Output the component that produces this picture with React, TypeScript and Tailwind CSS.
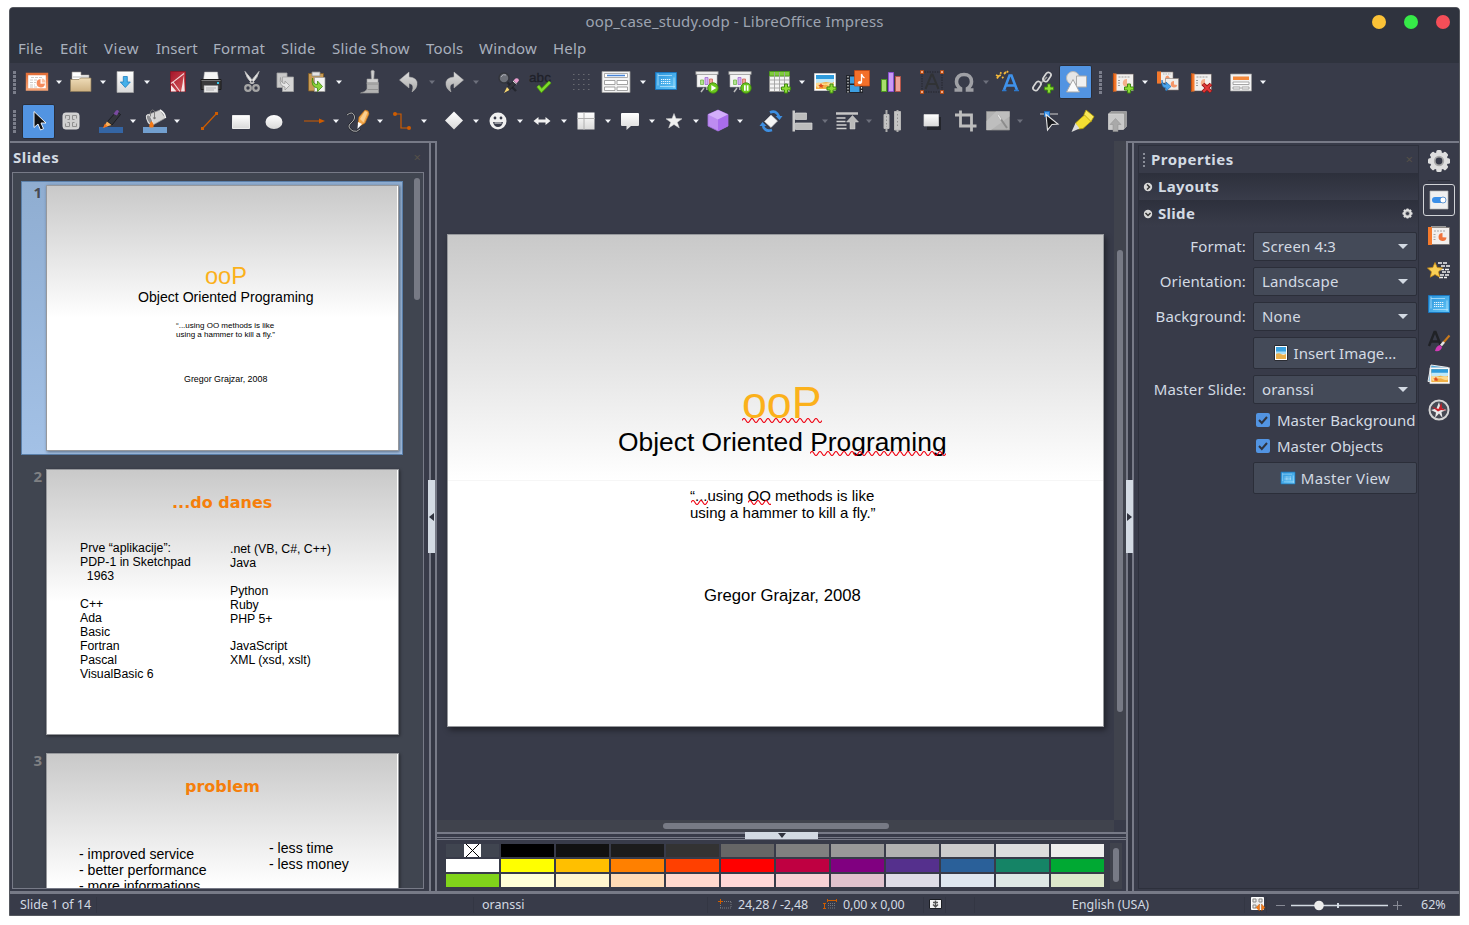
import type { ReactNode } from "react";

/* ---------- primitives ---------- */

type IconProps = { children: ReactNode; className?: string };

function Icon({ children, className = "" }: IconProps) {
  return (
    <svg viewBox="0 0 24 24" className={`block h-6 w-6 shrink-0 overflow-visible ${className}`} fill="none">
      {children}
    </svg>
  );
}

function Caret({ dim = false, className = "" }: { dim?: boolean; className?: string }) {
  return (
    <svg viewBox="0 0 8 8" className={`block h-2 w-2 shrink-0 ${className}`}>
      <path d="M1 2.500h6L4 6z" fill={dim ? "#6d707c" : "#f4f6fa"} />
    </svg>
  );
}

function Grip({ className = "" }: { className?: string }) {
  return (
    <div className={`flex w-1 shrink-0 flex-col gap-px ${className}`}>
      {[0, 1, 2, 3, 4, 5].map((i) => (
        <span key={i} className="h-[3px] w-[3px] bg-[#7b7e8b]" />
      ))}
    </div>
  );
}

/* ---------- shared drawings ---------- */

const Plus = ({ x = 0, y = 0 }: { x?: number; y?: number }) => (
  <path
    transform={`translate(${x} ${y})`}
    d="M3.500.500h3v3h3v3h-3v3h-3v-3h-3v-3h3z"
    fill="#8ddb35"
    stroke="#3f8a10"
  />
);

const SlideSheet = () => (
  <>
    <path d="M2 4h20.500v17H2z" fill="#f2f0ee" stroke="#5b5350" strokeWidth=".6" />
    <path d="M2 3.500h3.500v18H2z" fill="#f4782b" />
    <path d="M2 3.500h1.200v18H2z" fill="#c24f10" />
    <path d="M7.500 7h12M7 10.500h2M7 13h2M7 15.500h3" stroke="#9c9c9c" strokeDasharray="2 1" />
    <path d="M16 9a4 4 0 1 0 3.500 5.500L16 13.500z" fill="#f5b08c" />
  </>
);

const MasterDrawing = () => (
  <>
    <path d="M1.500 3.500h21v17h-21z" fill="url(#sky)" stroke="#1b76bd" />
    <path d="M4 4.500v12M4 6.500h14M20 19V8.500M6 17.500h15" stroke="#b4e2fb" strokeWidth=".8" />
    <path d="M7 10.500h10M7 12.500h10M7 14.500h10" stroke="#e8f6ff" strokeDasharray="1.300 .7" />
  </>
);

const Beach = () => (
  <>
    <path d="M1.500 3.500h21v17h-21z" fill="#fff" stroke="#d9d9d9" strokeWidth=".7" />
    <path d="M3 5h18v14H3z" fill="#f0b045" />
    <path d="M3 5h18v5H3z" fill="#2e9bdc" />
    <path d="M3 9h18v3q-2 1.500-5 .5t-6 0-7 .5z" fill="#bfe8f8" />
    <path d="M3 13q3-1 6 0t6 0 6 .5V16q-3 1.500-6-.5t-6 1-6-.5z" fill="#fdd98f" />
    <path d="M8 13l1 2 2 .3-1.500 1.200.3 1.500-1.800-.8-1.700.8.3-1.700L5.200 15l1.900-.2z" fill="#e04a1c" />
  </>
);

const Board = () => (
  <>
    <path d="M2 4h20v13H2z" fill="#f4f4f4" stroke="#b9b9b9" strokeWidth=".6" />
    <path d="M.8 1.500h22.400v3H.8z" fill="#e9e9e9" stroke="#8d8d8d" strokeWidth=".7" />
    <path d="M12 17v3m-3-2-3 4m9-4 3 4" stroke="#bdbdbd" strokeWidth="1.500" />
    <path d="M5.500 10h3v4.500h-3z" fill="#b3e38f" stroke="#72b84a" strokeWidth=".8" />
    <path d="M10 7.500h3v7h-3z" fill="#d6b1f0" stroke="#a06bd0" strokeWidth=".8" />
    <path d="M14.500 9h3v5.500h-3z" fill="#f0a59b" stroke="#ce6658" strokeWidth=".8" />
  </>
);

function Defs() {
  return (
    <svg className="absolute h-0 w-0" aria-hidden>
      <defs>
        <linearGradient id="sky" x1="0" y1="0" x2="1" y2="1">
          <stop offset="0" stopColor="#2c93da" />
          <stop offset="1" stopColor="#62c6f8" />
        </linearGradient>
        <linearGradient id="pale" x1="0" y1="0" x2="0" y2="1">
          <stop offset="0" stopColor="#ffffff" />
          <stop offset="1" stopColor="#d9d9d9" />
        </linearGradient>
        <linearGradient id="grey" x1="0" y1="0" x2="0" y2="1">
          <stop offset="0" stopColor="#dedede" />
          <stop offset="1" stopColor="#a9a9a9" />
        </linearGradient>
        <linearGradient id="folder" x1="0" y1="0" x2="0" y2="1">
          <stop offset="0" stopColor="#efdcb8" />
          <stop offset="1" stopColor="#cdb182" />
        </linearGradient>
        <linearGradient id="orange" x1="0" y1="0" x2="0" y2="1">
          <stop offset="0" stopColor="#e2703a" />
          <stop offset="1" stopColor="#f5a274" />
        </linearGradient>
        <linearGradient id="ruby" x1="0" y1="0" x2="1" y2="1">
          <stop offset="0" stopColor="#a5142a" />
          <stop offset="1" stopColor="#d65a5a" />
        </linearGradient>
      </defs>
    </svg>
  );
}

/* ---------- standard toolbar ---------- */

function StandardToolbar() {
  return (
    <div className="flex h-[38px] shrink-0 items-center gap-1.5 pl-[3px]">
      <Grip />
      <Icon className="ml-0.5">
        <path d="M2 4h20v15.500H2z" fill="#fff" stroke="url(#orange)" strokeWidth="2.400" />
        <path d="M6 7.500h12M5 10h7M5 12.500h6M5 15h5M5 17h7" stroke="#c9c4c0" strokeWidth=".9" strokeDasharray="3 1" />
        <path d="M15.500 9a4.200 4.200 0 1 0 4.500 4.500l-4.500.3z" fill="#f58b5c" />
        <path d="M16.800 8.500v4h3.700a4 4 0 0 0-3.700-4z" fill="#fbc2a4" />
      </Icon>
      <Caret />
      <Icon>
        <path d="M3 2h9v3h8v8H3z" fill="#fff" stroke="#98928a" strokeWidth=".6" />
        <path d="M4 7h16" stroke="#bbb" />
        <path d="M1.500 9.500H10L11.500 8h10.500V21.500h-20.500z" fill="url(#folder)" stroke="#8d7a58" strokeWidth=".7" />
      </Icon>
      <Caret />
      <Icon>
        <path d="M4 1.500h16.500v21H4z" fill="url(#pale)" stroke="#a5a5a5" strokeWidth=".7" />
        <path d="M10.300 6.500h4V12h3l-5 5.500-5-5.500h3z" fill="#45b0ea" stroke="#1d7fc0" strokeWidth=".8" />
      </Icon>
      <Caret />
      <Icon className="ml-[9px]">
        <path d="M4.500 1.500h15v20h-15z" fill="url(#ruby)" stroke="#8a1525" strokeWidth=".8" />
        <path d="M18 3.500L7 12l7 9.500M7 12l-2 1.500" stroke="#f3d6d8" strokeWidth="1.100" />
        <path d="M5 15v6.500h5.500z" fill="#f7e9e9" />
        <path d="M17.500 5q.8 8 1.200 16.500H15q2-8 2.500-16.500z" fill="#f4e4e4" />
      </Icon>
      <Icon className="ml-[3px]">
        <path d="M5.500 2h13l1 8h-15z" fill="#f5f5f5" stroke="#aaa" strokeWidth=".5" />
        <path d="M2 9.500h20v10H2z" fill="#3b3b3b" stroke="#1b1b1b" />
        <path d="M2.500 10.500h19" stroke="#777" />
        <path d="M5 15.500h14v7H5z" fill="#e8e8e8" stroke="#8c8c8c" strokeWidth=".6" />
        <path d="M7 18h10M7 20h8" stroke="#a5a5a5" strokeWidth=".8" />
        <path d="M18 12h2v2h-2z" fill="#35c7e8" />
      </Icon>
      <Icon className="ml-[11px]">
        <path d="M5 1.500q1 6 7.500 12.500l1.500-1.500Q9 6 5 1.500zM19 1.500q-1 6-7.500 12.500L10 12.500Q15 6 19 1.500z" fill="#e8e8e8" stroke="#c0c0c0" strokeWidth="1" />
        <circle cx="8" cy="18" r="2.800" stroke="#a5a5a5" strokeWidth="2.200" />
        <circle cx="16" cy="18" r="2.800" stroke="#a5a5a5" strokeWidth="2.200" />
      </Icon>
      <Icon className="ml-[3px]">
        <path d="M4 3h10v14.500H4z" fill="#c9c9c9" stroke="#a2a2a2" strokeWidth=".8" />
        <path d="M9.500 7h11v14.500h-11z" fill="#d5d5d5" stroke="#a2a2a2" strokeWidth=".8" />
        <path d="M7.500 7.500q0 6 4.500 6V11l4.500 4.500L12 20v-3Q6 16 7.500 7.500z" fill="#e6e6e6" stroke="#9a9a9a" strokeWidth=".8" />
      </Icon>
      <Icon className="ml-[3px]">
        <path d="M2.500 3.500h15V21h-15z" fill="#c99b54" stroke="#7d5a24" strokeWidth=".8" />
        <path d="M6 2h8v4H6z" fill="#e5e5e5" stroke="#8c8c8c" strokeWidth=".8" />
        <path d="M8.500 7.500h10.500v14H8.500z" fill="#f4f4f4" stroke="#9a9a9a" strokeWidth=".7" />
        <path d="M6.500 8q0 6.500 5 6.500V11l5 5.500-5 5v-3.500Q4.500 17 6.500 8z" fill="#8ad23c" stroke="#3f8a10" strokeWidth=".8" />
      </Icon>
      <Caret className="-ml-px" />
      <Icon className="ml-2.5">
        <path d="M12 1q1.700-1.500 3.300 0L14.800 9h4.200v5H8V9h4.500z" fill="#cfcfcf" stroke="#9a9a9a" strokeWidth=".6" />
        <path d="M8 12.500h11.500v10.500H1.500q5-1 6.500-4z" fill="#b3b3b3" stroke="#999" strokeWidth=".6" />
        <path d="M8.500 14h10.500M8.500 19.500h10.500" stroke="#929292" />
      </Icon>
      <Icon className="ml-2">
        <path d="M12 2v5q9 .5 8 8-.5 4-5 7 3-8-3-8.500v4.500L2.500 10z" fill="url(#grey)" stroke="#b5b5b5" strokeWidth=".5" />
      </Icon>
      <Caret dim className="ml-px" />
      <Icon>
        <path d="M12 2v5q-9 .5-8 8 .5 4 5 7-3-8 3-8.500v4.500L21.500 10z" fill="url(#grey)" stroke="#b5b5b5" strokeWidth=".5" />
      </Icon>
      <Caret dim />
      <Icon className="ml-2.5">
        <path d="M11 12l9 9" stroke="#25272f" strokeWidth="2.400" />
        <circle cx="8" cy="8" r="5" fill="#6d7078" stroke="#33353c" strokeWidth="1.500" />
        <path d="M5 7q2-3.500 5-2" stroke="#a9abb2" />
        <path d="M9 22l2.500-5 6.500-6.500 3 2.500-7.500 7z" fill="#33353b" stroke="#17181c" strokeWidth=".6" />
        <path d="M8 23l3-6 2.500 3z" fill="#f7d774" />
        <path d="M17.500 10.500l2-2q3-1 3.500 2l-2.500 3z" fill="#eb9fd0" />
        <path d="M17 11l3.500 3" stroke="#eee" />
      </Icon>
      <Icon className="ml-0.5">
        <text x="12" y="12" textAnchor="middle" fontFamily="Liberation Sans, Arial, sans-serif" fontSize="13.500" fill="#1f2129" stroke="#1f2129" strokeWidth=".3">
          abc
        </text>
        <path d="M10 16l3.500 4.500L22 12" stroke="#4e9a06" strokeWidth="3.800" />
        <path d="M10 16l3.500 4.500L22 12" stroke="#7ddc30" strokeWidth="2.200" />
      </Icon>
      <Icon className="ml-[11px]">
        {[4, 9, 14, 19].map((y) => (
          <path key={y} d={`M4 ${y + 0.5}h17`} stroke="#686a71" strokeWidth="1.200" strokeDasharray="1.500 3.500" />
        ))}
      </Icon>
      <svg viewBox="0 0 30 24" className="ml-0.5 block h-6 w-[30px] shrink-0" fill="none">
        <path d="M1 1.500h28v21H1z" fill="#f3f3f3" stroke="#9a9a9a" strokeWidth=".8" />
        <path d="M3.500 3.500h23v4h-23z" fill="#fff" stroke="#999" strokeWidth=".8" />
        <path d="M6 5.500h18" stroke="#4a86d8" strokeWidth="1.500" />
        <path d="M3.500 10.500h10.500v4H3.500zM16 10.500h10.500v4H16zM3.500 17h10.500v3.500H3.500zM16 17h10.500v3.500H16z" fill="#fff" stroke="#999" strokeWidth=".9" />
      </svg>
      <Caret className="ml-0.5" />
      <Icon className="-mt-0.5 ml-px">
        <MasterDrawing />
      </Icon>
      <Icon className="ml-[11px]">
        <Board />
        <circle cx="18" cy="18" r="5.200" fill="#6cc71e" stroke="#3f8a10" strokeWidth=".9" />
        <path d="M16.300 15l5 3-5 3z" fill="#fff" />
      </Icon>
      <Icon className="ml-[3px]">
        <Board />
        <circle cx="18" cy="18" r="5.200" fill="#6cc71e" stroke="#3f8a10" strokeWidth=".9" />
        <path d="M16 15.300h1.700v5.400H16zM18.800 15.300h1.700v5.400h-1.700z" fill="#fff" />
      </Icon>
      <Icon className="ml-2.5">
        <path d="M1.500 6h20v15.500h-20z" fill="#f4f4f4" stroke="#8f8f8f" strokeWidth=".8" />
        <path d="M1.500 1.500h20V6h-20z" fill="#7ecb3c" stroke="#4a9a14" strokeWidth=".8" />
        <path d="M6.500 2v19M11.500 2v19M16.500 2v19M2 10h19M2 14h19M2 18h19" stroke="#a2a2a2" strokeWidth=".9" />
        <Plus x={13} y={13.5} />
      </Icon>
      <Caret />
      <Icon className="ml-px">
        <Beach />
        <Plus x={13.5} y={13.5} />
      </Icon>
      <Icon className="ml-[3px]">
        <path d="M0 5h17v18H0z" fill="#22252c" />
        <path d="M4 6.500h9.500v7H4zM4 15h9.500v7H4z" fill="#3d9fe2" />
        <path d="M2 6v17M15.500 14v9" stroke="#dcdcdc" strokeWidth="1.200" strokeDasharray="1.500 1.500" />
        <path d="M8.500.500h15v15.500h-15z" fill="#f4702a" stroke="#c8480d" strokeWidth=".7" />
        <path d="M15.500 12.500V4q.5 2.500 3 4" stroke="#fff" strokeWidth="1.300" />
        <ellipse cx="13.800" cy="12.500" rx="2" ry="1.500" fill="#fff" />
      </Icon>
      <Icon className="ml-[3px]">
        <path d="M2.500 9.500h5v12h-5z" fill="#a8e06c" stroke="#4e9a20" />
        <path d="M9.500 2.500h5v19h-5z" fill="#c99bf5" stroke="#8a4fd0" />
        <path d="M16.500 6.500h5v15h-5z" fill="#eda398" stroke="#b7564a" />
      </Icon>
      <Icon className="ml-[11px]">
        <path d="M2 2h20v20H2z" stroke="#25272e" strokeDasharray="1.500 1" />
        <path d="M5.500 19l6-14.500h1L18.500 19M8 14h8" stroke="#303235" strokeWidth="2" />
        <path d="M.500.500h3v3h-3zM20.500.500h3v3h-3zM.500 20.500h3v3h-3zM20.500 20.500h3v3h-3z" fill="#f2a987" stroke="#b8470b" strokeWidth=".9" />
      </Icon>
      <Icon className="ml-0.5">
        <path
          d="M2.500 20h6v-1.500Q4.500 16 4.500 11.500C4.500 7 7.500 4.500 12 4.500s7.500 2.500 7.500 7q0 4.500-4 7V20h6"
          stroke="#9fa0a5"
          strokeWidth="3.600"
        />
      </Icon>
      <Caret dim />
      <Icon className="-ml-px">
        <path d="M9 20L14.500 5.500h2L22 20M11 15.500h9" stroke="#3f92ea" strokeWidth="2.600" />
        <path d="M7 20.500h4.500M19 20.500h5" stroke="#2c78cc" strokeWidth="1.500" />
        <path d="M2 8.500q2-4 4-3M5 2.500l1.500 1M9 4l2-2M12 1l1 1.500M1 5l2 1M7 8l1.500-1" stroke="#f4b93a" strokeWidth="1.800" />
      </Icon>
      <Icon className="ml-1.5">
        <path d="M9 14l7-7" stroke="#a0a0a0" strokeWidth="1.600" />
        <rect x="-2.600" y="-5" width="5.200" height="10" rx="2.600" transform="translate(16 7) rotate(35)" stroke="#d5d5d5" strokeWidth="1.700" />
        <rect x="-2.600" y="-5" width="5.200" height="10" rx="2.600" transform="translate(6 16) rotate(35)" stroke="#d5d5d5" strokeWidth="1.700" />
        <Plus x={13} y={13.5} />
      </Icon>
      <div className="-ml-0.5 flex h-[34px] w-[33px] shrink-0 items-center justify-center rounded-[2px] border border-[#2b2e39] bg-[#5294e2]">
        <Icon>
          <circle cx="9" cy="8" r="6.500" fill="#e6e6e6" stroke="#b5b5b5" />
          <path d="M12.500 6h10v11h-10z" fill="#f0f0f0" stroke="#aaa" />
          <path d="M9 9.500l6.500 12.500h-13z" fill="#fafafa" stroke="#a8a8a8" />
        </Icon>
      </div>
      <Grip className="ml-px" />
      <Icon className="ml-0.5">
        <SlideSheet />
        <Plus x={13} y={13.5} />
      </Icon>
      <Caret />
      <Icon className="ml-px">
        <path d="M1.500 2h15.500v11h-15.500z" fill="#efedeb" stroke="#8c7d75" strokeWidth=".6" />
        <path d="M1 1.500h4v12H1z" fill="#f4782b" />
        <path d="M7 4h8" stroke="#b5b5b5" strokeDasharray="1.500 1" />
        <path d="M12 5.500a3 3 0 1 0 3 4z" fill="#f4976b" />
        <path d="M9.500 8.500H22.500v11.500h-13z" fill="#efedeb" stroke="#8c7d75" strokeWidth=".6" />
        <path d="M18 11a3.300 3.300 0 1 0 3.300 4l-3.300-.5z" fill="#f4976b" />
        <path d="M6 10q0 4.500 4 4.500V12l5 4.500-5 4.500v-3q-5 0-4-8z" fill="#4ba3ea" stroke="#1b6cb5" strokeWidth=".7" />
      </Icon>
      <Icon className="ml-[3px]">
        <SlideSheet />
        <path d="M14 14l8 8m0-8l-8 8" stroke="#8e1111" strokeWidth="3.800" />
        <path d="M14.300 14.300l7.400 7.400m0-7.400l-7.400 7.400" stroke="#e23a3a" strokeWidth="2.200" />
      </Icon>
      <Icon className="ml-2.5">
        <path d="M1.500 4h21v17h-21z" fill="#f1f1f1" stroke="#9a9a9a" strokeWidth=".7" />
        <path d="M4 6.500h16V10H4z" fill="#f4883a" />
        <path d="M4 12h16v2.500H4zM4 17h7v2H4zM13 17h7v2h-7z" fill="#fff" stroke="#9c9c9c" strokeWidth=".9" />
      </Icon>
      <Caret />
    </div>
  );
}

/* ---------- drawing toolbar ---------- */

function DrawingToolbar() {
  return (
    <div className="flex h-[40px] shrink-0 items-center gap-1.5 pl-[3px]">
      <Grip />
      <div className="-ml-px flex h-[35px] w-[33px] shrink-0 items-center justify-center rounded-[2px] border border-[#2b2e39] bg-[#5294e2]">
        <Icon>
          <path d="M7 2.500v16l4-3.500 2.500 6 3-1.300-2.500-5.700H19z" fill="#101114" stroke="#fff" strokeWidth=".9" />
        </Icon>
      </div>
      <Icon className="-ml-0.5">
        <rect x="4" y="4" width="16" height="16" rx="2.500" fill="#cfcfcf" stroke="#dcdcdc" />
        <path d="M6.500 9.500v-3h4v4H8.500M17.500 9.500v-3h-4v4h2M6.500 14.500v3h4v-4H8.500M17.500 14.500v3h-4v-4h2" stroke="#8f8f8f" />
      </Icon>
      <Icon className="ml-2.5">
        <path d="M0 18h24v6H0z" fill="#3465a4" />
        <path d="M8.500 12.500l9-10 4 3-8.500 10.500z" fill="#33363c" stroke="#15161a" strokeWidth=".8" />
        <path d="M14.500 5L17 1.500q2-1.500 3 1l-2 4z" fill="#7a4aa0" />
        <path d="M8 12.500l4.500 3.500-8 2.500z" fill="#f9b05a" />
        <path d="M6 14.500l-2 4.500 4.500-1.500z" fill="#f7741c" />
      </Icon>
      <Caret />
      <Icon>
        <path d="M0 18h24v6H0z" fill="#729fcf" />
        <path d="M4 6l13-5 5.500 8L10 16 5 14z" fill="#d5d5d5" stroke="#9b9b9b" strokeWidth=".7" />
        <path d="M17 1q5 3 5.500 8" stroke="#f5f5f5" strokeWidth="1.500" />
        <ellipse cx="6.500" cy="10.500" rx="2.300" ry="5" transform="rotate(-25 6.500 10.500)" fill="#8a8b8f" stroke="#e4e4e4" />
        <path d="M11.500 9V2q-2-2.500-4 .5v5" stroke="#777" strokeWidth=".9" />
        <circle cx="11.500" cy="9" r="1.200" fill="#777" />
        <path d="M8.500 12q3.500 4 1.500 6.500H6.500q-1-3 2-6.500z" fill="#f57a16" />
      </Icon>
      <Caret />
      <Icon className="ml-2.5">
        <path d="M5.500 19.500l14-15" stroke="#ce5c00" strokeWidth="1.200" />
        <path d="M4 18h3v3H4zM18 3h3v3h-3z" fill="#ce5c00" />
      </Icon>
      <Icon className="ml-0.5">
        <path d="M3.500 6.500h17v13h-17z" fill="url(#pale)" stroke="#ececec" />
      </Icon>
      <Icon className="ml-[3px]">
        <ellipse cx="12" cy="13" rx="8.500" ry="7" fill="url(#pale)" />
      </Icon>
      <Icon className="ml-2.5">
        <path d="M2 12h15" stroke="#ce5c00" />
        <path d="M17 9.500l6 2.500-6 2.500z" fill="#ce5c00" />
      </Icon>
      <Caret />
      <Icon>
        <path d="M1 6q5-4 7 0t-3 8 2 8q4 1.500 7-2" stroke="#25272e" strokeWidth="2.200" />
        <path d="M1 6q5-4 7 0t-3 8 2 8q4 1.500 7-2" stroke="#d0d0d0" strokeWidth=".8" />
        <path d="M12 15l1-7 6-7q4 0 4 4l-4 9-5 3z" fill="#f3a548" stroke="#b76d16" strokeWidth=".6" />
        <path d="M14 10l5-8 2.500 1.500-4 10z" fill="#fbcf90" />
        <path d="M12 13l4 2-4.500 5z" fill="#fff" />
      </Icon>
      <Caret />
      <Icon>
        <path d="M5 5h6v14h7" stroke="#ce5c00" strokeWidth="1.200" />
        <circle cx="5" cy="5" r="2" fill="#ce5c00" />
        <circle cx="19" cy="19" r="2" fill="#ce5c00" />
      </Icon>
      <Caret />
      <Icon className="ml-2">
        <path d="M12 2.500l9 9-9 9-9-9z" fill="url(#pale)" />
      </Icon>
      <Caret />
      <Icon>
        <circle cx="12" cy="12" r="8.500" fill="#f0f0f0" />
        <circle cx="9" cy="9" r="1.400" fill="#393c4a" />
        <circle cx="15" cy="9" r="1.400" fill="#393c4a" />
        <path d="M7 13h10q-1 5-5 5t-5-5z" fill="#393c4a" />
        <path d="M8.500 14h7" stroke="#f0f0f0" />
      </Icon>
      <Caret />
      <Icon>
        <path d="M3.500 12l5-4v2.500h7V8l5 4-5 4v-2.500h-7V16z" fill="#f0f0f0" />
      </Icon>
      <Caret />
      <Icon>
        <path d="M3.500 3.500h17v17h-17z" fill="url(#pale)" />
        <path d="M10 3v18M3 9.500h18" stroke="#b0b0b0" />
      </Icon>
      <Caret />
      <Icon>
        <path d="M4 4h16q1 0 1 1v11q0 1-1 1h-7l-4.500 4V17H4q-1 0-1-1V5q0-1 1-1z" fill="url(#pale)" />
      </Icon>
      <Caret />
      <Icon>
        <path d="M12 4.500l2 5 6 .3-4.700 3.500 2 5.700L12 15.500 6.700 19l2-5.700L4 9.800l6-.3z" fill="#f0f0f0" stroke="#d0d0d0" strokeWidth=".5" />
      </Icon>
      <Caret />
      <Icon>
        <path d="M12 1l10 4.500v11.500L12 22 2 17V5.500z" fill="#bd8cf0" stroke="#a56ee0" strokeWidth=".8" />
        <path d="M12 1l10 4.500L12 10.500 2 5.500z" fill="#d3aefa" />
        <path d="M12 10.500V22l10-5V5.500z" fill="#a86ceb" />
      </Icon>
      <Caret />
      <Icon className="ml-[9px]">
        <path d="M12 6l6.500 6L12 18.500 5.500 12.500z" fill="#f5f5f5" stroke="#cfcfcf" strokeWidth=".6" />
        <path d="M11 3.500q6-3 9 4" stroke="#3d8fe2" strokeWidth="2.600" />
        <path d="M16.500 7h7L20.500 11z" fill="#3d8fe2" />
        <path d="M13 21q-6.500 2.500-9-4" stroke="#3d8fe2" strokeWidth="2.600" />
        <path d="M.500 17h7L3.500 13z" fill="#3d8fe2" />
      </Icon>
      <Icon className="ml-0.5">
        <path d="M1.500 1.500h2.500v21H1.500z" fill="#c9c9c9" />
        <path d="M4.500 4h11v6.500h-11zM4.500 14h16.500v6.500H4.500z" fill="#bcbcbc" stroke="#d8d8d8" strokeWidth=".7" />
      </Icon>
      <Caret dim />
      <Icon>
        <path d="M1 4.500h22" stroke="#c6c6c6" strokeWidth="2.500" />
        <path d="M1.500 9h9M1.500 12.500h9M1.500 16h10M1.500 19.500h10" stroke="#cfcfcf" strokeWidth="1.300" />
        <path d="M17.500 6.500l6 6.500h-3.500v7h-5v-7H11.500z" fill="#bababa" stroke="#d8d8d8" strokeWidth=".5" />
      </Icon>
      <Caret dim />
      <Icon className="ml-px">
        <path d="M6.500 1v22M17.500 1v22" stroke="#aaa" strokeWidth="2" />
        <path d="M4 5.500h5v14H4zM14.500 2.500h6v18.500h-6z" fill="#c4c4c4" stroke="#b5b5b5" />
        <path d="M6.500 7v11M17.500 5v14" stroke="#8e8e8e" strokeDasharray="1.500 2" />
      </Icon>
      <Icon className="ml-2.5">
        <path d="M7 8h14v13H7z" fill="#23252c" />
        <path d="M4 5.500h14.500v11.500H4z" fill="url(#pale)" stroke="#ddd" strokeWidth=".7" />
      </Icon>
      <Icon className="ml-1">
        <path d="M6.500 1.500v15.500H22.500M1 6h16.500v16.500" stroke="#bdbdbd" strokeWidth="2.800" />
      </Icon>
      <Icon className="ml-0.5">
        <path d="M.500 2.500h23v18.500H.500z" fill="#b2b2b2" stroke="#909090" strokeWidth=".8" />
        <path d="M.500 12L10 2.500h13.500v5L5 21H.500z" fill="#bebebe" />
        <path d="M12 6l9 13" stroke="#8c8c8c" strokeWidth="2" />
        <path d="M12 6l3 4.500" stroke="#e0e0e0" strokeWidth="1.500" />
      </Icon>
      <Caret dim />
      <Icon className="ml-[7px]">
        <path d="M3 5h18" stroke="#cfcfcf" strokeWidth="1.200" />
        <path d="M7.500 2.500h5v5h-5z" fill="#4ea1f2" stroke="#1c6dc0" />
        <path d="M9 5.500l12 9.500-6 .5-4.500 5.500z" fill="#17181c" stroke="#e6e6e6" strokeWidth="1.100" />
      </Icon>
      <Icon className="ml-1">
        <path d="M4.500 14l9.500-8.500 7 6-9 8-5 .500z" fill="#f4de32" stroke="#b59f08" strokeWidth=".8" />
        <path d="M13 5.500l2-4.500 8 6.500-3 5z" fill="#fbe95a" stroke="#b59f08" strokeWidth=".8" />
        <path d="M4.500 14l4 5.500L.500 23z" fill="#dcdcdc" />
      </Icon>
      <Icon className="ml-1">
        <path d="M3.500 5L6 2.500h15.500v15L19 20z" fill="#9b9b9b" stroke="#bdbdbd" strokeWidth=".6" />
        <path d="M3.500 5h15v15.500h-15z" fill="#c9c9c9" stroke="#d6d6d6" strokeWidth=".7" />
        <path d="M10.500 9.500l5.500 6h-3v7H8v-7H5z" fill="#a9a9a9" stroke="#8f8f8f" strokeWidth=".5" />
      </Icon>
    </div>
  );
}

/* ---------- slides panel ---------- */

function Slide({ className, children }: { className: string; children: ReactNode }) {
  return (
    <div
      className={`relative shrink-0 overflow-hidden border border-[#96989c] bg-linear-to-b from-[#c9c9c9] via-white via-50% to-white font-['Liberation_Sans',Arial,sans-serif] text-black ${className}`}
    >
      {children}
    </div>
  );
}

function Line({ className, children }: { className: string; children: ReactNode }) {
  return <div className={`absolute whitespace-pre ${className}`}>{children}</div>;
}

function Thumbnail({ n, selected = false, children }: { n: number; selected?: boolean; children: ReactNode }) {
  return (
    <div
      className={`flex h-[274px] w-[382px] shrink-0 border pt-[3px] ${
        selected ? "border-[#5c81ab] bg-linear-to-b from-[#8fadd1] to-[#a3c1e6]" : "border-transparent"
      }`}
    >
      <span
        className={`w-6 pr-1 text-right text-[15px] leading-[15px] font-bold ${selected ? "text-[#474b52]" : "text-[#7f8083]"}`}
      >
        {n}
      </span>
      <Slide className="h-[266px] w-[353px] shadow-[1px_1px_3px_rgba(0,0,0,.45)]">
        <div className="absolute inset-y-0 right-0 w-px bg-white" />
        {children}
      </Slide>
    </div>
  );
}

function SlidesPanel() {
  return (
    <section className="flex w-[419px] shrink-0 flex-col border-t-2 border-[#777a87] pl-0.5">
      <header className="flex h-[29px] items-center justify-between pr-2 pl-px text-[15px] font-bold text-[#d3dae3]">
        <span className="tracking-[.5px]">Slides</span>
        <span className="text-[13px] font-normal text-[#555048]">×</span>
      </header>
      <div className="flex h-[717px] w-[412px] overflow-hidden border border-[#777a87] bg-[#404550]">
        <div className="flex w-[396px] flex-col gap-2.5 pt-2 pl-2">
          <Thumbnail n={1} selected>
            <Line className="top-[79px] left-[158px] text-[23.600px] leading-none text-[#fbb11b]">ooP</Line>
            <Line className="top-[104px] left-[91px] text-[14.100px] leading-none">Object Oriented Programing</Line>
            <Line className="top-[135px] left-[129px] text-[8px] leading-[9px]">{"“...using OO methods is like\nusing a hammer to kill a fly.”"}</Line>
            <Line className="top-[189px] left-[137px] text-[8.900px] leading-none">Gregor Grajzar, 2008</Line>
          </Thumbnail>
          <Thumbnail n={2}>
            <Line className="top-[25px] left-[125px] font-['DejaVu_Sans',sans-serif] text-[16px] leading-none font-bold text-[#f57f0b]">...do danes</Line>
            <Line className="top-[71px] left-[33px] text-[12.300px] leading-[14px]">
              {"Prve “aplikacije”:\nPDP-1 in Sketchpad\n  1963\n\nC++\nAda\nBasic\nFortran\nPascal\nVisualBasic 6"}
            </Line>
            <Line className="top-[73px] left-[183px] text-[12.300px] leading-[13.900px]">
              {".net (VB, C#, C++)\nJava\n\nPython\nRuby\nPHP 5+\n\nJavaScript\nXML (xsd, xslt)"}
            </Line>
          </Thumbnail>
          <Thumbnail n={3}>
            <Line className="top-[25px] left-[138px] font-['DejaVu_Sans',sans-serif] text-[16px] leading-none font-bold text-[#f57f0b]">problem</Line>
            <Line className="top-[92px] left-[32px] text-[14.100px] leading-4">{"- improved service\n- better performance\n- more informations"}</Line>
            <Line className="top-[86px] left-[222px] text-[14.100px] leading-4">{"- less time\n- less money"}</Line>
          </Thumbnail>
        </div>
        <div className="pt-[5px] pl-[5px]">
          <div className="h-[122px] w-1.5 rounded-sm bg-[#777a85]" />
        </div>
      </div>
    </section>
  );
}

function Splitter({ side }: { side: "left" | "right" }) {
  return (
    <div className="relative w-2 shrink-0 border-x-2 border-t-2 border-[#777a87] bg-[#343744]">
      <div
        className={`absolute top-[337px] flex h-[73px] w-[7px] items-center justify-center bg-[#d3dae3] ${
          side === "left" ? "-left-[3px]" : "-left-[2px]"
        }`}
      >
        <svg viewBox="0 0 5 8" className="h-2 w-[5px]">
          <path d={side === "left" ? "M5 0v8L0 4z" : "M0 0v8l5-4z"} fill="#30333e" />
        </svg>
      </div>
    </div>
  );
}

/* ---------- editing area ---------- */

function Squiggle({ w, className }: { w: number; className: string }) {
  let d = "M0 2.500";
  for (let x = 0; x < w; x += 8) d += "q2-4 4 0t4 0";
  return (
    <svg width={w} height="5" className={`absolute overflow-hidden ${className}`} fill="none">
      <path d={d} stroke="#f00010" strokeWidth="1.100" />
    </svg>
  );
}

const PALETTE = [
  ["", "bg-[#000000]", "bg-[#111111]", "bg-[#1c1c1c]", "bg-[#333333]", "bg-[#666666]", "bg-[#808080]", "bg-[#999999]", "bg-[#b2b2b2]", "bg-[#cccccc]", "bg-[#dddddd]", "bg-[#eeeeee]"],
  ["bg-[#ffffff]", "bg-[#ffff00]", "bg-[#ffbf00]", "bg-[#ff8000]", "bg-[#ff4000]", "bg-[#ff0000]", "bg-[#bf0041]", "bg-[#800080]", "bg-[#55308d]", "bg-[#2a6099]", "bg-[#158466]", "bg-[#00a933]"],
  ["bg-[#81d41a]", "bg-[#ffffd7]", "bg-[#fff5ce]", "bg-[#ffdbb6]", "bg-[#ffd8ce]", "bg-[#ffd7d7]", "bg-[#f7d1d5]", "bg-[#e0c2cd]", "bg-[#dedce6]", "bg-[#dee6ef]", "bg-[#dee7e5]", "bg-[#dde8cb]"],
];

function Editor() {
  return (
    <main className="flex w-[689px] shrink-0 flex-col">
      <div className="flex h-[679px]">
        <div className="flex w-[677px] pt-[93px] pl-2.5">
          <Slide className="h-[493px] w-[657px] shadow-[2px_3px_6px_rgba(0,0,0,.45)]">
            <div className="absolute inset-x-0 top-[245px] h-px bg-[#f6f6f6]" />
            <Line className="top-[146px] left-[294px] text-[44.700px] leading-none text-[#fbb11b]">ooP</Line>
            <Squiggle w={80} className="top-[183px] left-[294px]" />
            <Line className="top-[194px] left-[170px] text-[26.400px] leading-none">Object Oriented Programing</Line>
            <Squiggle w={136} className="top-[216px] left-[362px]" />
            <Line className="top-[252px] left-[242px] text-[15px] leading-[17px]">
              {"“...using OO methods is like\nusing a hammer to kill a fly.”"}
            </Line>
            <Squiggle w={17} className="top-[265px] left-[243px]" />
            <Squiggle w={23} className="top-[265px] left-[300px]" />
            <Line className="top-[353px] left-[256px] text-[16.700px] leading-none">Gregor Grajzar, 2008</Line>
          </Slide>
        </div>
        <div className="w-3 bg-[#40434d] pt-[109px] pl-[3px]">
          <div className="h-[462px] w-1.5 rounded-sm bg-[#777a85]" />
        </div>
      </div>
      <div className="h-3 w-[677px] bg-[#40434d] pt-[3px] pl-[226px]">
        <div className="h-1.5 w-[226px] rounded-sm bg-[#777a85]" />
      </div>
      <div className="relative h-2 border-t-2 border-[#777a87]">
        <div className="mt-[3px] h-[3px] border-y border-[#777a87]" />
        <div className="absolute -top-0.5 left-[308px] flex h-[7px] w-[73px] items-center justify-center bg-[#d3dae3]">
          <svg viewBox="0 0 8 5" className="h-[5px] w-2">
            <path d="M0 0h8L4 5z" fill="#30333e" />
          </svg>
        </div>
      </div>
      <div className="flex pt-[3px] pl-[9px]">
        <div className="flex w-[658px] flex-col gap-0.5 pt-px">
          {PALETTE.map((row, r) => (
            <div key={r} className="flex gap-0.5">
              {row.map((c, i) =>
                c ? (
                  <div key={i} className={`h-[13px] w-[53px] ${c}`} />
                ) : (
                  <div key={i} className="flex h-[13px] w-[53px] justify-center bg-[#404550]">
                    <svg viewBox="0 0 17 13" className="h-[13px] w-[17px] bg-white">
                      <path d="M2 0l13 13M15 0L2 13" stroke="#000" strokeWidth="1" />
                    </svg>
                  </div>
                ),
              )}
            </div>
          ))}
        </div>
        <div className="ml-1.5 h-[46px] w-3 bg-[#40434d] pt-[5px] pl-[3px]">
          <div className="h-[34px] w-1.5 rounded-sm bg-[#777a85]" />
        </div>
      </div>
    </main>
  );
}

/* ---------- sidebar ---------- */

function Gear({ className = "" }: { className?: string }) {
  return (
    <svg viewBox="0 0 24 24" className={`block ${className}`}>
      {[0, 45, 90, 135].map((a) => (
        <rect key={a} x="9.300" y="1" width="5.400" height="22" rx="1.500" fill="#dedede" transform={`rotate(${a} 12 12)`} />
      ))}
      <circle cx="12" cy="12" r="9" fill="#dedede" />
      <circle cx="12" cy="12" r="5.200" fill="#a9a9a9" />
      <circle cx="12" cy="12" r="3.400" fill="#393c4a" />
    </svg>
  );
}

function SectionHeader({ title, open }: { title: string; open: boolean }) {
  return (
    <div className="flex h-[27px] items-center bg-linear-to-b from-[#2d303c] to-[#393c4a] pl-1 text-[15px] font-bold">
      <svg viewBox="0 0 10 10" className="mr-[5px] h-2.5 w-2.5">
        <circle cx="5" cy="5" r="4.200" fill="#d8d8d8" />
        <path d={open ? "M2.500 4l2.500 2.500L7.500 4" : "M4 2.500L6.500 5 4 7.500"} stroke="#333" strokeWidth="1.500" fill="none" />
      </svg>
      <span className="grow tracking-[.3px]">{title}</span>
      {open && <Gear className="mr-[5px] h-[11px] w-[11px]" />}
    </div>
  );
}

function Field({ label, children, className = "" }: { label?: string; children: ReactNode; className?: string }) {
  return (
    <div className={`flex items-center ${className}`}>
      <span className="w-[107px] shrink-0 text-right tracking-[.1px] whitespace-nowrap">{label}</span>
      <div className="ml-[7px] grow">{children}</div>
    </div>
  );
}

function Select({ value }: { value: string }) {
  return (
    <div className="flex h-[29px] w-[164px] items-center justify-between rounded-[2px] border border-[#2b2e39] bg-[#444a58] pr-2 pl-2 tracking-[.15px]">
      <span>{value}</span>
      <svg viewBox="0 0 10 5" className="h-[5px] w-2.5">
        <path d="M0 0h10L5 5z" fill="#d3dae3" />
      </svg>
    </div>
  );
}

function Button({ icon, children }: { icon: ReactNode; children: ReactNode }) {
  return (
    <div className="flex h-8 w-[164px] items-center justify-center rounded-[2px] border border-[#2b2e39] bg-[#444a58] whitespace-nowrap">
      {icon}
      {children}
    </div>
  );
}

function Check({ children }: { children: ReactNode }) {
  return (
    <div className="flex h-[26px] items-center gap-[7px] pl-[3px] whitespace-nowrap">
      <span className="flex h-3.5 w-3.5 shrink-0 items-center justify-center rounded-[2px] bg-[#5294e2]">
        <svg viewBox="0 0 10 10" className="h-2.5 w-2.5" fill="none">
          <path d="M1 5l2.800 3L9 2" stroke="#2f343f" strokeWidth="2" />
        </svg>
      </span>
      {children}
    </div>
  );
}

function Sidebar() {
  return (
    <aside className="flex w-[325px] shrink-0 border-t-2 border-[#777a87] pl-1">
      <div className="mt-0.5 flex h-[744px] w-[281px] flex-col border border-[#2d303c] text-[15px] text-[#d3dae3]">
        <div className="flex h-[27px] items-center pl-1 font-bold">
          <div className="flex w-2 flex-col gap-0.5">
            {[0, 1, 2, 3].map((i) => (
              <span key={i} className="h-0.5 w-0.5 bg-[#8a8d98]" />
            ))}
          </div>
          <span className="grow tracking-[.5px]">Properties</span>
          <span className="pr-[5px] text-[13px] font-normal text-[#555048]">×</span>
        </div>
        <SectionHeader title="Layouts" open={false} />
        <SectionHeader title="Slide" open />
        <Field label="Format:" className="mt-[5px]"><Select value="Screen 4:3" /></Field>
        <Field label="Orientation:" className="mt-1.5"><Select value="Landscape" /></Field>
        <Field label="Background:" className="mt-1.5"><Select value="None" /></Field>
        <Field className="mt-1.5">
          <Button
            icon={
              <svg viewBox="0 0 14 16" className="mr-1.5 h-4 w-3.5">
                <path d="M.500.500h13v15H.500z" fill="#fff" stroke="#2a2c33" />
                <path d="M2 2h10v6.500H2z" fill="#3aa2e0" />
                <path d="M2 6.500h10V9H2z" fill="#a9def5" />
                <path d="M2 9q3-1.500 5 0t5 0v5H2z" fill="#eab04c" />
              </svg>
            }
          >
            Insert Image...
          </Button>
        </Field>
        <Field label="Master Slide:" className="mt-1.5"><Select value="oranssi" /></Field>
        <Field className="mt-[3px]"><Check>Master Background</Check></Field>
        <Field><Check>Master Objects</Check></Field>
        <Field className="mt-[3px]">
          <Button
            icon={
              <svg viewBox="0 2 24 20" className="mr-[5px] h-3.5 w-4" fill="none" preserveAspectRatio="none">
                <MasterDrawing />
              </svg>
            }
          >
            <span className="tracking-[.3px]">Master View</span>
          </Button>
        </Field>
      </div>
      <div className="flex grow flex-col items-center">
        <Gear className="mt-1.5 h-6 w-6" />
        <div className="mt-[7px] h-px w-[22px] bg-[#2b2e39]" />
        <div className="mt-[3px] flex h-8 w-8 items-center justify-center rounded-[3px] border border-[#d0d2d6]">
          <Icon>
            <path d="M3 3h18v18H3z" fill="#f0f0f0" stroke="#b5b5b5" strokeWidth=".7" />
            <rect x="5" y="9" width="14" height="6" rx="3" fill="#3b8fe8" />
            <circle cx="16" cy="12" r="3" fill="#fff" stroke="#4a86c8" strokeWidth=".8" />
          </Icon>
        </div>
        <Icon className="mt-2">
          <path d="M4 2h15v3H4z" fill="#9b9b9b" />
          <path d="M1.500 3.500h21v17h-21z" fill="#f2efed" stroke="#6e6661" strokeWidth=".6" />
          <path d="M1 3h4v18H1z" fill="#f57a2c" />
          <path d="M7 7h12M6.500 10.500h3M6.500 13h3M6.500 15.500h3" stroke="#a5a5a5" strokeDasharray="2 1" />
          <path d="M15.500 9a4 4 0 1 0 4 4.500l-4-.2z" fill="#f0743c" />
        </Icon>
        <Icon className="mt-2.5">
          <path d="M11 5h10M14 8h9M13 11.500h10M15 14h8M13 17h9M12 19.500h8" stroke="#f2f2f2" strokeWidth="1.600" strokeDasharray="4 1" />
          <path d="M8 4.500l2.200 5 5.300.6-4 3.700 1.200 5.400L8 16.500 3.300 19.200l1.200-5.400-4-3.700 5.300-.6z" fill="#f9cf56" stroke="#c98c14" strokeWidth=".8" />
        </Icon>
        <Icon className="mt-2.5">
          <MasterDrawing />
        </Icon>
        <Icon className="mt-3.5">
          <path d="M2 16L7.500 2h1L14 16M4 11.500h8" stroke="#202226" strokeWidth="2.400" />
          <path d="M22.500 5.500l-7 8" stroke="#c97a1c" strokeWidth="2" />
          <path d="M17 12l-3 3.500" stroke="#e5e5e5" strokeWidth="2.600" />
          <path d="M13 15q-4 1-5 6 6 1 7-4z" fill="#d13ab5" />
        </Icon>
        <Icon className="mt-[9px]">
          <path d="M4 2l17 2.500v12L1 18.500z" fill="#52a9dd" stroke="#eee" />
          <g transform="translate(1.500 1.500) scale(.93)">
            <Beach />
          </g>
        </Icon>
        <Icon className="mt-[11px]">
          <circle cx="12" cy="12" r="9.500" fill="#474a54" stroke="#d4d4d4" strokeWidth="2" />
          <path d="M12 4l1.500 6 6 2-5 2 1 6-3.500-4.500L8 20l1-5.500-5-2.500 5.500-1.500z" fill="#e9e9e9" />
          <path d="M14.500 4.500l-3 6.500L4.500 8.500l6.500 5 3-1.500 5 .5-4-2.500z" fill="#c6202a" />
        </Icon>
      </div>
    </aside>
  );
}

/* ---------- status bar ---------- */

const Divider = () => <span className="h-4 w-px shrink-0 bg-[#333643]" />;

function StatusBar() {
  return (
    <footer className="flex h-[21px] shrink-0 items-center pt-px text-[12.500px] whitespace-nowrap text-[#d3dae3]">
      <span className="w-[86px] shrink-0 pl-2.5">Slide 1 of 14</span>
      <Divider />
      <span className="w-[376px] shrink-0" />
      <Divider />
      <span className="w-[233px] shrink-0 pl-2">oranssi</span>
      <Divider />
      <svg viewBox="0 0 14 10" className="-mt-0.5 ml-2.5 h-2.5 w-3.5 shrink-0" fill="none">
        <path d="M2.500 0v5M0 2.500h5" stroke="#ce5c00" />
        <path d="M6 2.500h7M13 3v6M2.500 6v3M2 9h11" stroke="#777a80" strokeDasharray="1 1" />
      </svg>
      <span className="w-[89px] shrink-0 pl-1.5 tracking-[-.15px]">24,28 / -2,48</span>
      <svg viewBox="0 0 14 10" className="-mt-0.5 ml-0.5 h-2.5 w-3.5 shrink-0" fill="none">
        <path d="M4.500 0v3M13.500 0v3M5 1.500h8M0 4.500h3M0 9.500h3M1.500 5v4" stroke="#ce5c00" />
        <path d="M5 4.500h8M5 6.500h8M5 9h8" stroke="#777a80" strokeDasharray="1 1" />
      </svg>
      <span className="w-[86px] shrink-0 pl-1.5 tracking-[-.1px]">0,00 x 0,00</span>
      <Divider />
      <svg viewBox="0 0 13 10" className="-mt-[3px] mr-[3px] ml-[5px] h-2.5 w-[13px] shrink-0" fill="none">
        <path d="M.500.500h12v9H.500z" fill="#f3f3f3" stroke="#1c1e24" />
        <path d="M6.500 1.500V8M4 5.500L6.500 8 9 5.500M4 3.500h5" stroke="#555" strokeWidth="1.400" />
      </svg>
      <Divider />
      <span className="w-[28px] shrink-0" />
      <Divider />
      <span className="w-[269px] shrink-0 pl-0.5 text-center">English (USA)</span>
      <Divider />
      <svg viewBox="0 0 14 14" className="-mt-0.5 mr-px ml-1.5 h-3.5 w-3.5 shrink-0" fill="none">
        <path d="M.500.500h12v12H.500z" fill="#ececec" stroke="#fff" />
        <path d="M2 2h3v3H2zM8 2h3v3H8zM2 8h3v3H2z" stroke="#888" />
        <path d="M8.500 7v7L5 10.500zM10.500 7v7l3.500-3.500z" fill="#f57a16" stroke="#a94a00" strokeWidth=".4" />
      </svg>
      <Divider />
      <svg viewBox="0 0 128 14" className="-mt-px ml-[9px] h-3.5 w-[128px] shrink-0" fill="none">
        <path d="M0 7.500h9M117 7.500h9M121.500 3v9" stroke="#878a95" />
        <path d="M15 7.500h97" stroke="#d3dae3" strokeWidth="1.500" />
        <path d="M62 5v5" stroke="#d3dae3" strokeWidth="2" />
        <circle cx="43" cy="7.500" r="4.800" fill="#ececec" />
      </svg>
      <span className="ml-[5px]">
        <Divider />
      </span>
      <span className="ml-3">62%</span>
    </footer>
  );
}

/* ---------- window ---------- */

export default function App() {
  return (
    <div className="h-[925px] w-[1469px] overflow-hidden bg-white pt-[7px] pl-[9px] font-['Noto_Sans',sans-serif]">
      <Defs />
      <div className="flex h-[909px] w-[1451px] flex-col overflow-hidden rounded-t-[4px] border border-[#55585f] bg-[#383b49]">
        <div className="flex h-[27px] shrink-0 items-center bg-[#2f333e]">
          <span className="w-[87px]" />
          <span className="grow text-center text-[15px] tracking-[.15px] text-[#9da3b0]">oop_case_study.odp - LibreOffice Impress</span>
          <div className="flex w-[87px] gap-[18px] pt-px">
            <span className="h-3.5 w-3.5 rounded-full bg-[#fbc237]" />
            <span className="h-3.5 w-3.5 rounded-full bg-[#36ea48]" />
            <span className="h-3.5 w-3.5 rounded-full bg-[#f44e58]" />
          </div>
        </div>
        <nav className="flex h-7 shrink-0 items-center bg-[#2f333e] pb-px pl-2 text-[15px] whitespace-nowrap text-[#a9b0bd]">
          <span className="w-[42px] tracking-[.2px]">File</span>
          <span className="w-[44px] tracking-[.2px]">Edit</span>
          <span className="w-[52px] tracking-[.6px]">View</span>
          <span className="w-[57px]">Insert</span>
          <span className="w-[68px] tracking-[.2px]">Format</span>
          <span className="w-[51px] tracking-[.2px]">Slide</span>
          <span className="w-[94px] tracking-[.2px]">Slide Show</span>
          <span className="w-[53px] tracking-[.2px]">Tools</span>
          <span className="w-[74px] tracking-[.2px]">Window</span>
          <span className="tracking-[.2px]">Help</span>
        </nav>
        <StandardToolbar />
        <DrawingToolbar />
        <div className="flex h-[750px] shrink-0">
          <SlidesPanel />
          <Splitter side="left" />
          <Editor />
          <Splitter side="right" />
          <Sidebar />
        </div>
        <div className="h-[3px] shrink-0 bg-[#777a87]" />
        <StatusBar />
      </div>
    </div>
  );
}
